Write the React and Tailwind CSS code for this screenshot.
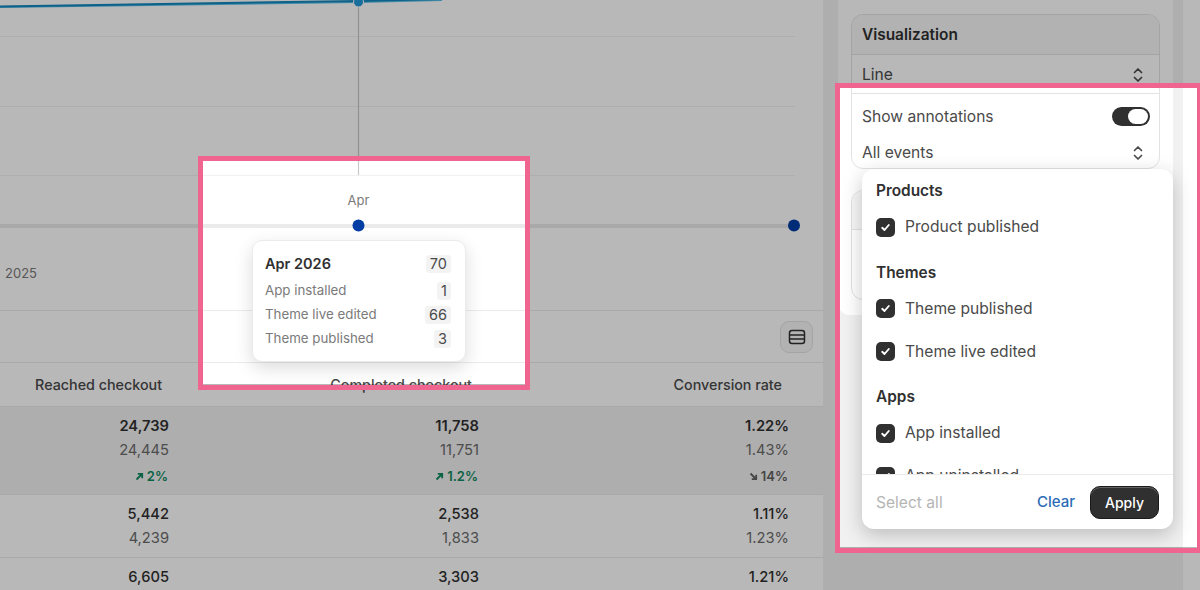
const UPPER_ROWS = [
  {
    values: ['24,739', '11,758', '1.22%'],
    previous: ['24,445', '11,751', '1.43%'],
    deltas: [
      { label: '2%', up: true },
      { label: '1.2%', up: true },
      { label: '14%', up: false },
    ],
    strong: true,
  },
  {
    values: ['5,442', '2,538', '1.11%'],
    previous: ['4,239', '1,833', '1.23%'],
  },
  {
    values: ['6,605', '3,303', '1.21%'],
    previous: [],
  },
];

const EVENT_GROUPS = [
  { title: 'Products', items: ['Product published'] },
  { title: 'Themes', items: ['Theme published', 'Theme live edited'] },
  { title: 'Apps', items: ['App installed', 'App uninstalled'] },
];

const TOOLTIP_ROWS = [
  { label: 'App installed', value: 1 },
  { label: 'Theme live edited', value: 66 },
  { label: 'Theme published', value: 3 },
];

function SelectorIcon() {
  return (
    <svg width="12" height="16" viewBox="0 0 12 16" fill="none" stroke="#4a4a4a" strokeWidth="1.7" strokeLinecap="round" strokeLinejoin="round">
      <path d="M2.5 5.5 6 2l3.5 3.5" />
      <path d="M2.5 10.5 6 14l3.5-3.5" />
    </svg>
  );
}

function Arrow({ up }) {
  return (
    <svg width="9" height="9" viewBox="0 0 9 9" fill="none" stroke="currentColor" strokeWidth="1.8">
      {up ? <path d="M1.5 7.5 7 2M2.8 1.8H7.2V6.2" /> : <path d="M1.5 1.5 7 7M2.8 7.2H7.2V2.8" />}
    </svg>
  );
}

function Chart() {
  return (
    <svg width="823" height="311" viewBox="0 0 823 311" className="block">
      <path d="M0 36.5H795M0 106.5H795M0 175.5H795" stroke="#f1f1f1" />
      <path d="M358.5 0V175" stroke="#c9c9c9" strokeWidth="1.2" />
      <path d="M0 226H795" stroke="#ebebeb" strokeWidth="4" />
      <path d="M0 7C120 6 250 3 358 2L442 0" stroke="#5cbfe8" strokeWidth="2" fill="none" />
      <path d="M0 6.5C120 5 250 2 358 1L442 -1" stroke="#1487bd" strokeWidth="2" fill="none" />
      <circle cx="358.5" cy="2" r="5" fill="#2098d8" stroke="#ffffff" strokeWidth="1" />
      <circle cx="358.5" cy="225.5" r="6" fill="#003da5" />
      <circle cx="794" cy="225.5" r="6" fill="#003da5" />
      <text x="358.5" y="205" textAnchor="middle" fontSize="13" fill="#7a7a7a">Apr</text>
      <text x="5" y="278" fontSize="13" fill="#7a7a7a">2025</text>
    </svg>
  );
}

function TableRow({ row }) {
  return (
    <div className={`grid grid-cols-[169px_310px_310px] border-b border-[#ebebeb] text-right text-[14.7px] leading-6 ${row.strong ? 'bg-[#f1f1f1] pb-[6px] pt-[7px]' : 'py-[7px]'}`}>
      {row.values.map((value, i) => (
        <div key={i}>
          <div className={`text-[#303030] ${row.strong ? 'font-semibold' : 'font-medium'}`}>{value}</div>
          {row.previous[i] && <div className="text-[#6b6b6b]">{row.previous[i]}</div>}
          {row.deltas && (
            <div className={`mt-[2px] flex items-center justify-end gap-[3px] pr-px text-[13px] font-semibold ${row.deltas[i].up ? 'text-[#0e8a5f]' : 'text-[#616161]'}`}>
              <Arrow up={row.deltas[i].up} />
              {row.deltas[i].label}
            </div>
          )}
        </div>
      ))}
    </div>
  );
}

function EventCheckbox({ label }) {
  return (
    <label className="flex h-[43px] items-center gap-[10px] text-[#4a4a4a]">
      <span className="flex h-[19px] w-[19px] shrink-0 items-center justify-center rounded-[5px] bg-[#303030]">
        <svg width="11" height="11" viewBox="0 0 11 11" fill="none" stroke="#ffffff" strokeWidth="1.9" strokeLinecap="round" strokeLinejoin="round">
          <path d="M2.2 5.8 4.5 8 8.8 3" />
        </svg>
      </span>
      {label}
    </label>
  );
}

export default function App() {
  return (
    <div className="relative flex h-[590px] w-[1200px] overflow-hidden bg-[#f1f1f1] font-['Inter',sans-serif] text-[15.6px] text-[#303030]">
      {/* Left — chart and table */}
      <main className="w-[823px] shrink-0 bg-white">
        <div className="h-[311px] border-b border-[#ebebeb]">
          <Chart />
        </div>
        <div className="flex h-[52px] items-center justify-end border-b border-[#ebebeb] pr-[10px]">
          <button type="button" className="flex h-[32px] w-[33px] items-center justify-center rounded-[9px] border border-[#e3e3e3] bg-[#f7f7f7]">
            <svg width="18" height="16" viewBox="0 0 18 16" fill="none" stroke="#303030" strokeWidth="1.5">
              <rect x="1.5" y="1.5" width="15" height="13" rx="2.5" />
              <path d="M1.5 6h15M1.5 10h15" />
            </svg>
          </button>
        </div>
        <div className="grid h-[44px] grid-cols-[162px_310px_310px] items-center border-b border-[#ebebeb] text-right text-[14.3px] font-medium text-[#4a4a4a]">
          <div>Reached checkout</div>
          <div>Completed checkout</div>
          <div>Conversion rate</div>
        </div>
        {UPPER_ROWS.map((row) => (
          <TableRow key={row.values[0]} row={row} />
        ))}
      </main>

      {/* Right — settings */}
      <aside className="ml-[15px] h-[315px] w-[335px] shrink-0 rounded-b-xl bg-white px-[13px] pt-[14px]">
        <section className="overflow-hidden rounded-xl border border-[#e3e3e3]">
          <h2 className="flex h-[39px] items-center bg-[#f7f7f7] px-[10px] pt-[1px] text-[15.4px] font-semibold">Visualization</h2>
          <div className="flex h-[40px] items-center justify-between border-y border-[#e3e3e3] pl-[10px] pr-[15px] pt-[1px] text-[#4a4a4a]">
            Line
            <SelectorIcon />
          </div>
          <div className="flex h-[44px] items-center justify-between pl-[10px] pr-[9px] pt-[1px] text-[#4a4a4a]">
            Show annotations
            <span className="flex h-[19px] w-[38px] items-center justify-end rounded-full bg-[#303030] pr-[2px]">
              <span className="h-[15px] w-[20px] rounded-full bg-white" />
            </span>
          </div>
          <div className="flex h-[30px] items-center justify-between pl-[10px] pr-[15px] text-[#4a4a4a]">
            All events
            <SelectorIcon />
          </div>
        </section>
        <section className="mt-[21px] h-[110px] rounded-xl border border-[#e3e3e3]">
          <div className="h-[39px] rounded-t-xl border-b border-[#e3e3e3] bg-[#f7f7f7]" />
        </section>
      </aside>
      <div className="ml-[10px] h-full flex-1 bg-white" />

      {/* Tooltip */}
      <div className="absolute left-[252px] top-[240px] flex h-[122px] w-[214px] flex-col rounded-[10px] border border-[#ebebeb] bg-white pb-[10px] pl-[12px] pr-[14px] pt-[11px] shadow-[0_6px_18px_rgba(0,0,0,0.14)]">
        <div className="mb-[3px] flex h-[24px] items-center justify-between text-[14.5px] font-semibold">
          Apr 2026
          <span className="rounded-[3px] bg-[#f3f3f3] px-[4px] text-[14.5px] font-normal leading-[18px] text-[#4a4a4a]">70</span>
        </div>
        {TOOLTIP_ROWS.map((row) => (
          <div key={row.label} className="flex h-[24px] items-center justify-between text-[13.3px] text-[#7a7a7a]">
            {row.label}
            <span className="rounded-[3px] bg-[#f3f3f3] px-[4px] text-[14.5px] leading-[18px] text-[#4a4a4a]">{row.value}</span>
          </div>
        ))}
      </div>

      {/* Events popover */}
      <div className="absolute left-[862px] top-[169px] flex h-[360px] w-[311px] flex-col rounded-xl bg-white shadow-[0_6px_20px_rgba(0,0,0,0.22)]">
        <div className="h-[306px] overflow-hidden border-b border-[#ebebeb] px-[14px] pt-[11px]">
          {EVENT_GROUPS.map((group) => (
            <div key={group.title} className="mb-[13px]">
              <h3 className="flex h-[22px] items-center text-[15.4px] font-semibold">{group.title}</h3>
              <div className="mt-[3.5px]">
                {group.items.map((item) => (
                  <EventCheckbox key={item} label={item} />
                ))}
              </div>
            </div>
          ))}
        </div>
        <div className="flex flex-1 items-center justify-between pl-[14px] pr-[14px]">
          <span className="mt-[1px] text-[#b5b5b5]">Select all</span>
          <div className="flex items-center gap-[15px]">
            <span className="mt-[1px] text-[15px] font-medium text-[#2a6cb5]">Clear</span>
            <button type="button" className="h-[33px] w-[69px] rounded-[10px] border border-[#1a1a1a] bg-[#303030] text-[14px] font-medium text-white shadow-[inset_0_1px_0_rgba(255,255,255,0.25)]">
              Apply
            </button>
          </div>
        </div>
      </div>

      {/* Dim layer with the two highlighted holes cut out */}
      <div className="pointer-events-none absolute inset-0 bg-black/[0.28] [clip-path:path(evenodd,'M0_0H1200V590H0ZM203_161H525V384H203ZM840_88H1197V547H840Z')]" />
      <div className="pointer-events-none absolute left-[198px] top-[156px] h-[234px] w-[332px] border-[5.5px] border-[#f0658f]" />
      <div className="pointer-events-none absolute left-[835px] top-[83px] h-[470px] w-[365px] border-y-[5.5px] border-l-[5px] border-r-[3px] border-[#f0658f]" />
    </div>
  );
}
